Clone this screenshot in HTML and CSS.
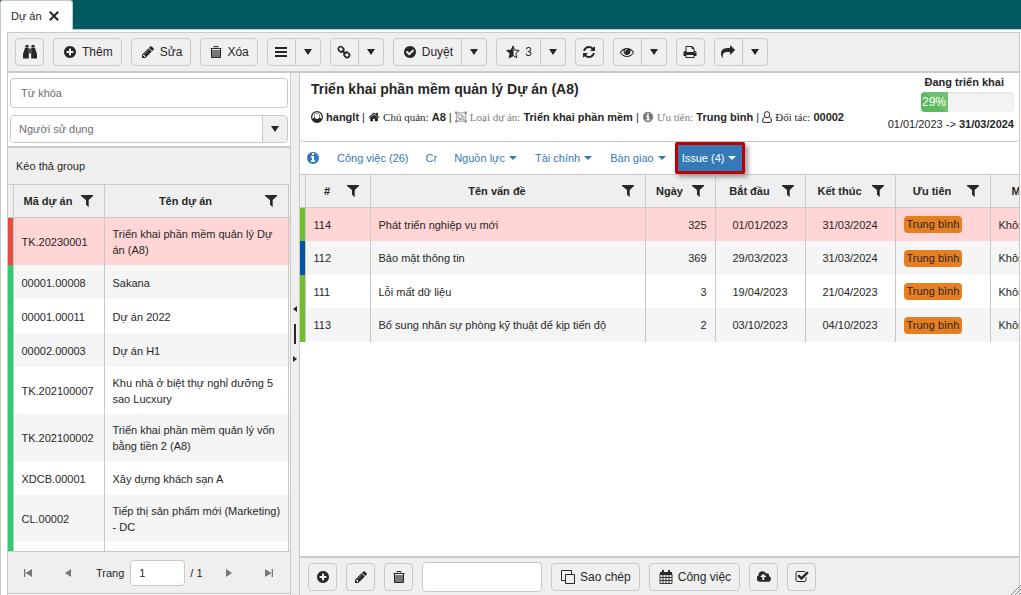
FILE: index.html
```
<!DOCTYPE html>
<html lang="vi">
<head>
<meta charset="utf-8">
<title>Dự án</title>
<link rel="stylesheet" href="styles.css">
</head>
<body>
<svg class="sprite" aria-hidden="true">
  <symbol id="i-filter" viewBox="0 0 12 12"><path d="M0 0H12V1L7.700 5V12L5 9.800V5L0 1z"/></symbol>
  <symbol id="i-plus" viewBox="0 0 1792 1792"><path d="M1344 960v-128q0-26-19-45t-45-19h-256v-256q0-26-19-45t-45-19h-128q-26 0-45 19t-19 45v256h-256q-26 0-45 19t-19 45v128q0 26 19 45t45 19h256v256q0 26 19 45t45 19h128q26 0 45-19t19-45v-256h256q26 0 45-19t19-45zm320-64q0 209-103 385.500t-279.500 279.500-385.500 103-385.500-103-279.500-279.500-103-385.500 103-385.500 279.500-279.500 385.500-103 385.500 103 279.500 279.500 103 385.500z"/></symbol>
  <symbol id="i-pencil" viewBox="0 0 1792 1792"><path d="M491 1536l91-91-235-235-91 91v107h128v128h107zm523-928q0-22-22-22-10 0-17 7l-542 542q-7 7-7 17 0 22 22 22 10 0 17-7l542-542q7-7 7-17zm-54-192l416 416-832 832h-416v-416zm683 96q0 53-37 90l-166 166-416-416 166-165q36-38 90-38 53 0 91 38l235 234q37 39 37 91z"/></symbol>
  <symbol id="i-trash" viewBox="0 0 12 14"><path d="M4 2.500V1.500h4V2.500M.5 3.500h11M1.500 4v8.500h9V4" fill="none" stroke="currentColor"/><path d="M2 5h8v7H2z" opacity=".6"/></symbol>
  <symbol id="i-check" viewBox="0 0 1792 1792"><path d="M1412 734q0-28-18-46l-91-90q-19-19-45-19t-45 19l-408 407-226-226q-19-19-45-19t-45 19l-91 90q-18 18-18 46 0 27 18 45l362 362q19 19 45 19 27 0 46-19l543-543q18-18 18-45zm252 162q0 209-103 385.500t-279.500 279.500-385.500 103-385.500-103-279.500-279.500-103-385.500 103-385.500 279.500-279.500 385.500-103 385.500 103 279.500 279.500 103 385.500z"/></symbol>
  <symbol id="i-refresh" viewBox="0 0 1792 1792"><path d="M1639 1056q0 5-1 7-64 268-268 434.500t-478 166.500q-146 0-282.500-55t-243.500-157l-129 129q-19 19-45 19t-45-19-19-45v-448q0-26 19-45t45-19h448q26 0 45 19t19 45-19 45l-137 137q71 66 161 102t187 36q134 0 250-65t186-179q11-17 53-117 8-23 30-23h192q13 0 22.500 9.500t9.500 22.500zm25-800v448q0 26-19 45t-45 19h-448q-26 0-45-19t-19-45 19-45l138-138q-148-137-349-137-134 0-250 65t-186 179q-11 17-53 117-8 23-30 23h-199q-13 0-22.500-9.500t-9.500-22.500v-7q65-268 270-434.500t480-166.500q146 0 284 55.500t245 156.500l130-129q19-19 45-19t45 19 19 45z"/></symbol>
  <symbol id="i-eye" viewBox="0 0 1792 1792"><path d="M1664 960q-152-236-381-353 61 104 61 225 0 185-131.500 316.500t-316.500 131.500-316.500-131.500-131.500-316.500q0-121 61-225-229 117-381 353 133 205 333.500 326.500t434.500 121.500 434.500-121.500 333.500-326.500zm-720-384q0-20-14-34t-34-14q-125 0-214.500 89.500t-89.500 214.500q0 20 14 34t34 14 34-14 14-34q0-86 61-147t147-61q20 0 34-14t14-34zm848 384q0 34-20 69-140 230-376.500 368.500t-499.500 138.500-499.500-139-376.500-368q-20-35-20-69t20-69q140-229 376.500-368t499.500-139 499.500 139 376.500 368q20 35 20 69z"/></symbol>
  <symbol id="i-print" viewBox="0 0 1792 1792"><path d="M448 1536h896v-256h-896v256zm0-640h896v-384h-160q-40 0-68-28t-28-68v-160h-640v640zm1152 64q0-26-19-45t-45-19-45 19-19 45 19 45 45 19 45-19 19-45zm128 0v416q0 13-9.500 22.500t-22.500 9.500h-224v160q0 40-28 68t-68 28h-960q-40 0-68-28t-28-68v-160h-224q-13 0-22.500-9.500t-9.500-22.500v-416q0-79 56.500-135.500t135.500-56.500h64v-544q0-40 28-68t68-28h672q40 0 88 20t76 48l152 152q28 28 48 76t20 88v256h64q79 0 135.500 56.500t56.500 135.500z"/></symbol>
  <symbol id="i-share" viewBox="0 0 1792 1792"><path d="M1792 640q0 26-19 45l-512 512q-19 19-45 19t-45-19-19-45v-256h-224q-98 0-175.500 6t-154 21.500-133 42.500-105.500 69.500-80 101-48.500 138.500-17.500 181q0 55 5 123 0 6 2.500 23.500t2.500 26.500q0 15-8.500 25t-23.500 10q-16 0-28-17-7-9-13-22t-13.500-30-10.500-24q-127-285-127-451 0-199 53-333 162-403 875-403h224v-256q0-26 19-45t45-19 45 19l512 512q19 19 19 45z"/></symbol>
  <symbol id="i-info" viewBox="0 0 1792 1792"><path d="M1152 1376v-160q0-14-9-23t-23-9h-96v-512q0-14-9-23t-23-9h-320q-14 0-23 9t-9 23v160q0 14 9 23t23 9h96v320h-96q-14 0-23 9t-9 23v160q0 14 9 23t23 9h448q14 0 23-9t9-23zm-128-896v-160q0-14-9-23t-23-9h-192q-14 0-23 9t-9 23v160q0 14 9 23t23 9h192q14 0 23-9t9-23zm640 416q0 209-103 385.500t-279.500 279.500-385.500 103-385.500-103-279.500-279.500-103-385.500 103-385.500 279.500-279.500 385.500-103 385.500 103 279.500 279.500 103 385.500z"/></symbol>
  <symbol id="i-home" viewBox="0 0 1792 1792"><path d="M1472 992v480q0 26-19 45t-45 19h-384v-384h-256v384h-384q-26 0-45-19t-19-45v-480q0-1 .5-3t.5-3l575-474 575 474q1 2 1 6zm223-69l-62 74q-8 9-21 11h-3q-13 0-21-7l-692-577-692 577q-12 8-24 7-13-2-21-11l-62-74q-8-10-7-23.500t11-21.500l719-599q32-26 76-26t76 26l244 204v-195q0-14 9-23t23-9h192q14 0 23 9t9 23v408l219 182q10 8 11 21.500t-7 23.500z"/></symbol>
  <symbol id="i-task" viewBox="0 0 1792 1792"><path d="M1472 930v318q0 119-84.500 203.500t-203.500 84.500h-832q-119 0-203.500-84.500t-84.500-203.500v-832q0-119 84.500-203.500t203.500-84.500h832q63 0 117 25 15 7 18 23 3 17-9 29l-49 49q-10 10-23 10-3 0-9-2-23-6-45-6h-832q-66 0-113 47t-47 113v832q0 66 47 113t113 47h832q66 0 113-47t47-113v-254q0-13 9-22l64-64q10-10 23-10 6 0 12 3 20 8 20 29zm231-489l-814 814q-24 24-57 24t-57-24l-430-430q-24-24-24-57t24-57l110-110q24-24 57-24t57 24l263 263 647-647q24-24 57-24t57 24l110 110q24 24 24 57t-24 57z"/></symbol>
  <symbol id="i-cloud" viewBox="0 0 1856 1792"><path d="M1216 864q0-14-9-23l-352-352q-9-9-23-9t-23 9l-351 351q-10 12-10 24 0 14 9 23t23 9h224v352q0 13 9.500 22.500t22.500 9.500h192q13 0 22.500-9.500t9.500-22.500v-352h224q13 0 22.500-9.500t9.500-22.500zm640 288q0 159-112.500 271.500t-271.500 112.500h-1088q-185 0-316.500-131.500t-131.500-316.500q0-130 70-240t188-165q-2-30-2-43 0-212 150-362t362-150q156 0 285.500 87t188.500 231q71-62 166-62 106 0 181 75t75 181q0 76-41 138 130 31 213.500 135.500t83.500 238.500z"/></symbol>
  <symbol id="i-search" viewBox="0 0 14 14"><path d="M2.500 0h3v2h-3zM8.500 0h3v2h-3zM2.200 2.500h3.600V13.500H0V9zM11.800 2.500H8.200V13.500H14V9zM6.200 3.500h1.600v5H6.200z"/></symbol>
  <symbol id="i-bars" viewBox="0 0 12 12"><path d="M0 1h12v2H0zM0 5h12v2H0zM0 9h12v2H0z"/></symbol>
  <symbol id="i-link" viewBox="0 0 14 14"><g fill="none" stroke="currentColor" stroke-width="1.700"><rect x="1.200" y="2" width="5.600" height="4.600" rx="2.200" transform="rotate(45 4 4.300)"/><rect x="7" y="7.600" width="5.600" height="4.600" rx="2.200" transform="rotate(45 9.800 9.900)"/><path d="M5 5.300 9 9"/></g></symbol>
  <symbol id="i-star" viewBox="0 0 14 14"><path d="M7 1 8.700 5.100 13.200 5.500 9.800 8.400 10.800 12.800 7 10.500 3.200 12.800 4.200 8.400.8 5.500 5.300 5.100z" fill="none" stroke="currentColor"/><path d="M7.500.3V10.700L3 13.300 4 8.500.3 5.200 5.200 4.800z"/></symbol>
  <symbol id="i-user" viewBox="0 0 12 12"><path fill-rule="evenodd" d="M6 0a6 6 0 1 0 0 12A6 6 0 1 0 6 0zM6 1.200a4.800 4.800 0 0 1 4.300 6.800Q9.800 6.900 8.700 6.600A3 3.200 0 1 0 3.300 6.600Q2.200 6.900 1.700 8A4.800 4.800 0 0 1 6 1.200zM6 2.600a2.500 2.700 0 1 1 0 5.400a2.500 2.700 0 1 1 0-5.400z"/></symbol>
  <symbol id="i-partner" viewBox="0 0 10 12"><path d="M5 .6a2.700 3.100 0 1 1 0 6.200a2.700 3.100 0 1 1 0-6.200M2.700 6Q.6 6.500.6 10q0 1.400 1.400 1.400h6q1.400 0 1.400-1.400Q9.400 6.500 7.300 6" fill="none" stroke="currentColor"/></symbol>
  <symbol id="i-group" viewBox="0 0 13 12"><g fill="none" stroke="currentColor" stroke-width=".8"><path d="M1.500 1.500h10v9h-10z"/><path d="M3.500 3.500h4v4h-4zM7.500 5h2.200v4H5V7.500"/></g><path d="M0 0h2.600v2.600H0zM10.400 0H13v2.600h-2.600zM0 9.400h2.600V12H0zM10.400 9.400H13V12h-2.600z" opacity=".8"/></symbol>
  <symbol id="i-copy" viewBox="0 0 14 14"><path d="M4.500 4.500h9v9h-9zM4.500 10.500H.5V.5H10.500v4" fill="none" stroke="currentColor"/></symbol>
  <symbol id="i-calendar" viewBox="0 0 14 14"><path d="M1 2h12v3H1z"/><path d="M3 0h2v3H3zM9 0h2v3H9z"/><path d="M1 4v9.500h12V4M1 7.500h12M1 10.500h12M4 5v8.500M7 5v8.500M10 5v8.500" fill="none" stroke="currentColor" stroke-width=".9"/></symbol>
  <symbol id="i-close" viewBox="0 0 10 10"><path d="M.8.8 9.200 9.200M9.200.8.8 9.200" stroke="currentColor" stroke-width="2"/></symbol>
  <symbol id="i-first" viewBox="0 0 8 8"><path d="M0 0h1.300v8H0zM8 0v8L1.500 4z"/></symbol>
  <symbol id="i-prev" viewBox="0 0 8 8"><path d="M7 0v8L1 4z"/></symbol>
</svg>

<header class="tabs">
  <div class="tab"><span>Dự án</span><button class="tab-close" aria-label="Đóng"><svg class="ic10"><use href="#i-close"/></svg></button></div>
</header>

<main class="frame">
  <div class="panel">
    <div class="toolbar">
      <button class="btn icon" aria-label="Tìm"><svg class="ic"><use href="#i-search"/></svg></button>
      <button class="btn"><svg class="ic"><use href="#i-plus"/></svg>Thêm</button>
      <button class="btn"><svg class="ic"><use href="#i-pencil"/></svg>Sửa</button>
      <button class="btn"><svg class="ic12"><use href="#i-trash"/></svg>Xóa</button>
      <div class="split"><button class="btn icon" aria-label="Danh sách"><svg class="ic12"><use href="#i-bars"/></svg></button><button class="btn caret" aria-label="Mở"><i class="down"></i></button></div>
      <div class="split"><button class="btn icon" aria-label="Liên kết"><svg class="ic"><use href="#i-link"/></svg></button><button class="btn caret" aria-label="Mở"><i class="down"></i></button></div>
      <div class="split"><button class="btn"><svg class="ic"><use href="#i-check"/></svg>Duyệt</button><button class="btn caret" aria-label="Mở"><i class="down"></i></button></div>
      <div class="split"><button class="btn"><svg class="ic"><use href="#i-star"/></svg>3</button><button class="btn caret" aria-label="Mở"><i class="down"></i></button></div>
      <button class="btn icon" aria-label="Tải lại"><svg class="ic"><use href="#i-refresh"/></svg></button>
      <div class="split"><button class="btn icon" aria-label="Xem"><svg class="ic"><use href="#i-eye"/></svg></button><button class="btn caret" aria-label="Mở"><i class="down"></i></button></div>
      <button class="btn icon" aria-label="In"><svg class="ic"><use href="#i-print"/></svg></button>
      <div class="split"><button class="btn icon" aria-label="Chia sẻ"><svg class="ic"><use href="#i-share"/></svg></button><button class="btn caret" aria-label="Mở"><i class="down"></i></button></div>
    </div>

    <div class="body">
      <aside class="side">
        <div class="search">
          <input class="field" type="text" placeholder="Từ khóa" aria-label="Từ khóa">
          <div class="combo"><input type="text" placeholder="Người sử dụng" aria-label="Người sử dụng"><button class="combo-btn" aria-label="Mở"><i class="down"></i></button></div>
        </div>
        <div class="list">
          <div class="grouping">Kéo thả group</div>
          <div class="scroll">
            <table class="grid">
              <colgroup><col class="w-bar"><col class="w-code"><col><col class="w-end"></colgroup>
              <thead><tr><th></th><th><div class="th"><span>Mã dự án</span><svg class="ic12"><use href="#i-filter"/></svg></div></th><th><div class="th"><span>Tên dự án</span><svg class="ic12"><use href="#i-filter"/></svg></div></th><th></th></tr></thead>
              <tbody>
                <tr class="on"><td class="red"></td><td>TK.20230001</td><td>Triển khai phần mềm quản lý Dự án (A8)</td><td></td></tr>
                <tr><td class="green"></td><td>00001.00008</td><td>Sakana</td><td></td></tr>
                <tr><td class="green"></td><td>00001.00011</td><td>Dự án 2022</td><td></td></tr>
                <tr><td class="green"></td><td>00002.00003</td><td>Dự án H1</td><td></td></tr>
                <tr><td class="green"></td><td>TK.202100007</td><td>Khu nhà ở biệt thự nghỉ dưỡng 5 sao Lucxury</td><td></td></tr>
                <tr><td class="green"></td><td>TK.202100002</td><td>Triển khai phần mềm quản lý vốn bằng tiền 2 (A8)</td><td></td></tr>
                <tr><td class="green"></td><td>XDCB.00001</td><td>Xây dựng khách sạn A</td><td></td></tr>
                <tr><td class="green"></td><td>CL.00002</td><td>Tiếp thị sản phẩm mới (Marketing) - DC</td><td></td></tr>
                <tr><td class="green"></td><td></td><td></td><td></td></tr>
              </tbody>
            </table>
          </div>
          <div class="pager">
            <button aria-label="Trang đầu"><svg class="ic8"><use href="#i-first"/></svg></button>
            <button aria-label="Trang trước"><svg class="ic8"><use href="#i-prev"/></svg></button>
            <label for="page">Trang</label><input id="page" type="text" value="1"><span>/ 1</span>
            <button class="flip" aria-label="Trang sau"><svg class="ic8"><use href="#i-prev"/></svg></button>
            <button class="flip" aria-label="Trang cuối"><svg class="ic8"><use href="#i-first"/></svg></button>
          </div>
        </div>
      </aside>

      <div class="splitter"><i class="arrow-l"></i><i class="grip"></i><i class="arrow-r"></i></div>

      <section class="detail">
        <div class="summary">
          <div class="about">
            <h1>Triển khai phần mềm quản lý Dự án (A8)</h1>
            <p class="meta"><svg class="ic12"><use href="#i-user"/></svg> <b>hanglt</b> | <svg class="ic12"><use href="#i-home"/></svg> <span class="tag">Chủ quản:</span> <b>A8</b> | <svg class="ic12 dim"><use href="#i-group"/></svg> <span class="tag dim">Loại dự án:</span> <b>Triển khai phần mềm</b> | <svg class="ic12 dim"><use href="#i-info"/></svg> <span class="tag dim">Ưu tiên:</span> <b>Trung bình</b> | <svg class="ic10"><use href="#i-partner"/></svg> <span class="tag">Đối tác:</span> <b>00002</b></p>
          </div>
          <div class="status">
            <b>Đang triển khai</b>
            <div class="progress"><div class="done" style="width:29%">29%</div></div>
            <div class="dates">01/01/2023 -&gt; <b>31/03/2024</b></div>
          </div>
        </div>
        <nav class="nav">
          <a href="#" aria-label="Thông tin"><svg class="ic"><use href="#i-info"/></svg></a>
          <a href="#">Công việc (26)</a>
          <a href="#">Cr</a>
          <a href="#">Nguồn lực<i class="small"></i></a>
          <a href="#">Tài chính<i class="small"></i></a>
          <a href="#">Bàn giao<i class="small"></i></a>
          <a href="#" class="current">Issue (4)<i class="small"></i></a>
        </nav>
        <div class="scroll">
          <table class="grid issues">
            <colgroup><col class="w-bar"><col class="w-65"><col class="w-275"><col class="w-70"><col class="w-90"><col class="w-90"><col class="w-95"><col></colgroup>
            <thead><tr><th></th><th><div class="th"><span>#</span><svg class="ic12"><use href="#i-filter"/></svg></div></th><th><div class="th"><span>Tên vấn đề</span><svg class="ic12"><use href="#i-filter"/></svg></div></th><th><div class="th"><span>Ngày</span><svg class="ic12"><use href="#i-filter"/></svg></div></th><th><div class="th"><span>Bắt đầu</span><svg class="ic12"><use href="#i-filter"/></svg></div></th><th><div class="th"><span>Kết thúc</span><svg class="ic12"><use href="#i-filter"/></svg></div></th><th><div class="th"><span>Ưu tiên</span><svg class="ic12"><use href="#i-filter"/></svg></div></th><th><div class="cut">Mức</div></th></tr></thead>
            <tbody>
              <tr class="on"><td class="lime"></td><td>114</td><td>Phát triển nghiệp vụ mới</td><td class="num">325</td><td class="mid">01/01/2023</td><td class="mid">31/03/2024</td><td><span class="badge">Trung bình</span></td><td>Không</td></tr>
              <tr><td class="blue"></td><td>112</td><td>Bảo mật thông tin</td><td class="num">369</td><td class="mid">29/03/2023</td><td class="mid">31/03/2024</td><td><span class="badge">Trung bình</span></td><td>Không</td></tr>
              <tr><td class="lime"></td><td>111</td><td>Lỗi mất dữ liệu</td><td class="num">3</td><td class="mid">19/04/2023</td><td class="mid">21/04/2023</td><td><span class="badge">Trung bình</span></td><td>Không</td></tr>
              <tr><td class="lime"></td><td>113</td><td>Bổ sung nhân sự phòng kỹ thuật để kịp tiến độ</td><td class="num">2</td><td class="mid">03/10/2023</td><td class="mid">04/10/2023</td><td><span class="badge">Trung bình</span></td><td>Không</td></tr>
            </tbody>
          </table>
        </div>
        <div class="actions">
          <button class="btn icon" aria-label="Thêm"><svg class="ic"><use href="#i-plus"/></svg></button>
          <button class="btn icon" aria-label="Sửa"><svg class="ic"><use href="#i-pencil"/></svg></button>
          <button class="btn icon" aria-label="Xóa"><svg class="ic12"><use href="#i-trash"/></svg></button>
          <input class="quick" type="text" aria-label="Tìm nhanh">
          <button class="btn"><svg class="ic"><use href="#i-copy"/></svg>Sao chép</button>
          <button class="btn"><svg class="ic"><use href="#i-calendar"/></svg>Công việc</button>
          <button class="btn icon" aria-label="Tải lên"><svg class="ic"><use href="#i-cloud"/></svg></button>
          <button class="btn icon" aria-label="Hoàn thành"><svg class="ic"><use href="#i-task"/></svg></button>
        </div>
      </section>
    </div>
  </div>
  <svg class="resize" viewBox="0 0 10 10" aria-hidden="true"><path d="M0 10 10 0M4 10l6-6M8 10l2-2" stroke="currentColor"/></svg>
</main>
</body>
</html>
```
FILE: styles.css
```
* { box-sizing: border-box; }
body {
  margin: 0;
  height: 100vh;
  display: flex;
  flex-direction: column;
  overflow: hidden;
  font: 11px/16px "Liberation Sans", Arial, sans-serif;
  color: #272727;
  background: #fff;
}
button, input { font: inherit; color: inherit; margin: 0; }
button { background: none; border: 0; padding: 0; }
svg { fill: currentColor; flex: none; }
.sprite { position: absolute; width: 0; height: 0; }
.ic { width: 14px; height: 14px; }
.ic12 { width: 12px; height: 12px; }
.ic10 { width: 10px; height: 12px; }
.ic8 { width: 8px; height: 8px; }
.btn .ic12 { height: 14px; }

.tabs { flex: none; height: 30px; background: #005b60; border-bottom: 1px solid #c9c9c9; }
.tab {
  display: inline-flex; align-items: center; gap: 7px;
  height: 30px; padding: 0 13px 0 10px;
  background: #fff; border: 1px solid #c9c9c9; border-bottom: 0; border-radius: 3px 3px 0 0;
}
.tab-close { display: flex; }

.frame { flex: 1; min-height: 0; display: flex; padding: 2px 1px 0 6px; border-left: 1px solid #c9c9c9; position: relative; }
.panel { flex: 1; min-width: 0; display: flex; flex-direction: column; background: #efefef; border: 1px solid #c9c9c9; border-bottom: 0; }
.toolbar { display: flex; gap: 9px; padding: 5px 7px; border-bottom: 2px solid #c9c9c9; }
.btn {
  height: 28px; padding: 0 8px 0 9px; display: flex; align-items: center; gap: 5px;
  font-size: 12px; background: #f0f0f0; border: 1px solid #c9c9c9; border-radius: 4px;
}
.icon { width: 29px; padding: 0; justify-content: center; }
.split { display: flex; }
.split .btn:first-child { border-radius: 4px 0 0 4px; }
.caret { width: 25px; padding: 0; justify-content: center; border-left: 0; border-radius: 0 4px 4px 0; }
.down { border: 4px solid transparent; border-top: 6px solid #272727; border-bottom: 0; }

.body { flex: 1; min-height: 0; display: flex; }
.side { width: 283px; display: flex; flex-direction: column; border-right: 1px solid #c9c9c9; background: #fff; }
.search { padding: 5px 2px 3px; display: flex; flex-direction: column; gap: 7px; border-bottom: 2px solid #c9c9c9; }
.field, .combo { height: 30px; border: 1px solid #c9c9c9; border-radius: 4px; background: #fff; }
.field { width: 100%; padding: 0 10px; }
.combo { height: 28px; display: flex; overflow: hidden; }
.combo input { flex: 1; min-width: 0; border: 0; padding: 0 8px; }
.combo-btn { width: 25px; display: flex; align-items: center; justify-content: center; background: #f0f0f0; border-left: 1px solid #c9c9c9; }
::placeholder { color: #6e6e6e; opacity: 1; }
.list { flex: 1; min-height: 0; display: flex; flex-direction: column; margin-bottom: 1px; border-bottom: 1px solid #c9c9c9; }
.grouping { height: 36px; padding: 10px 8px; background: #efefef; }
.scroll { flex: 1; min-height: 0; overflow: hidden; background: #fff; }

.grid { width: 100%; table-layout: fixed; border-collapse: collapse; }
.grid th { height: 33px; padding: 0; background: #efefef; border: 1px solid #c9c9c9; border-left: 0; }
.grid td { height: 34px; padding: 8px 4px 7px 8px; border-right: 1px solid #c9c9c9; }
.grid th:last-child, .grid td:last-child { border-right: 0; }
.grid td:first-child { padding: 0; }
.grid tbody tr:nth-child(even) { background: #f5f5f5; }
.grid tbody .on { background: #ffd5d5; }
.th { display: flex; align-items: center; padding: 0 11px 0 2px; }
.th span { flex: 1; }
.cut { padding-left: 21px; text-align: left; overflow: hidden; }
.w-bar { width: 5px; }
.w-code { width: 91px; }
.w-end { width: 2px; }
.side td:last-child { padding: 0; }
.w-65 { width: 65px; }
.w-70 { width: 70px; }
.w-90 { width: 90px; }
.w-95 { width: 95px; }
.w-275 { width: 275px; }
.issues td { padding: 1px 8px 0; white-space: nowrap; overflow: hidden; }
.issues tr:nth-child(odd) td { height: 33px; }
.red { background: #e74c3c; }
.green { background: #2ecc71; }
.lime { background: #72bf2c; }
.blue { background: #0054a6; }
.num { text-align: right; }
.mid { text-align: center; }
.badge { display: inline-block; padding: 0 3px; line-height: 17px; background: #e67e22; border-radius: 4px; }

.pager { height: 42px; display: flex; align-items: center; background: #efefef; border-top: 1px solid #c9c9c9; }
.pager button { width: 40px; height: 26px; display: flex; align-items: center; justify-content: center; color: #777; }
.pager label { padding: 0 6px 0 8px; }
.pager input { width: 55px; height: 26px; padding: 0 8px; border: 1px solid #c9c9c9; border-radius: 4px; }
.pager span { padding: 0 6px 0 5px; }
.flip svg { transform: rotate(180deg); }

.splitter { width: 8px; display: flex; flex-direction: column; align-items: center; justify-content: center; gap: 12px; }
.arrow-l, .arrow-r { border: 3px solid transparent; }
.arrow-l { border-right: 4px solid #272727; border-left: 0; }
.arrow-r { border-left: 4px solid #272727; border-right: 0; }
.grip { width: 2px; height: 20px; background: #272727; }

.detail { flex: 1; min-width: 0; display: flex; flex-direction: column; background: #fff; border-left: 1px solid #c9c9c9; }
.summary { height: 69px; display: flex; justify-content: space-between; padding: 0 5px 0 11px; border-bottom: 1px solid #c9c9c9; border-radius: 0 0 4px 4px; }
h1 { margin: 0; padding-top: 6px; font-size: 14px; line-height: 20px; }
.meta { margin: 0; padding-top: 10px; white-space: nowrap; }
.meta svg { vertical-align: -2px; }
.tag { font-family: "Liberation Serif", "Times New Roman", serif; }
.dim { color: #7b7b7b; }
.status { display: flex; flex-direction: column; align-items: flex-end; }
.status > b { padding-right: 10px; padding-top: 1px; }
.progress { width: 93px; height: 20px; margin: 2px 0 4px; background: #f3f3f3; border-radius: 4px; box-shadow: inset 0 1px 2px #ddd; overflow: hidden; }
.done { height: 20px; padding-left: 1px; line-height: 20px; font-size: 12px; color: #fff; background: linear-gradient(45deg, #5cb85c 50%, #6fc06f 50%); }

.nav { display: flex; height: 32px; padding: 0 0 0 6px; }
.nav a { display: flex; align-items: center; gap: 4px; padding: 0 9px; color: #337ab7; text-decoration: none; }
.nav a:first-child { padding-left: 0; }
.nav .current { color: #fff; background: #337ab7; border: 3px solid #c00000; padding: 0 6px 0 4px; border-radius: 2px; box-shadow: 3px 3px 5px #999; z-index: 1; }
.nav a:nth-child(-n+3) { padding-right: 8px; }
.small { border: 4px solid transparent; border-top-color: currentColor; border-bottom: 0; }

.actions { display: flex; align-items: center; gap: 9px; height: 39px; padding: 0 8px; background: #efefef; border-top: 2px solid #c9c9c9; }
.quick { width: 120px; height: 30px; border: 1px solid #c9c9c9; border-radius: 4px; }
.resize { position: absolute; right: 0; bottom: 0; width: 10px; height: 10px; color: #888; }
```
